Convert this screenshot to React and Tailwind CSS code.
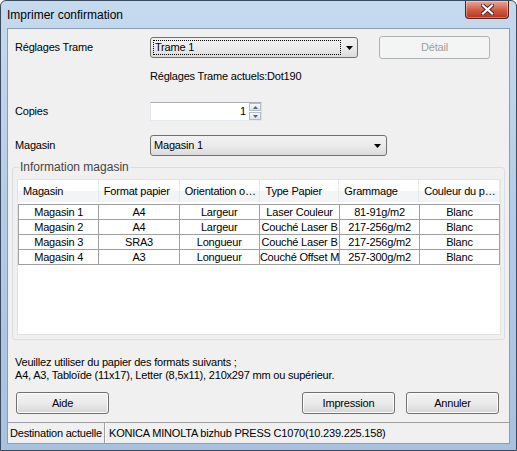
import React from "react";

const COLONNES = [
  { titre: "Magasin", w: "w-[81px]" },
  { titre: "Format papier", w: "w-[81px]" },
  { titre: "Orientation o…", w: "w-[81px]" },
  { titre: "Type Papier", w: "w-[79px]" },
  { titre: "Grammage", w: "w-[80px]" },
  { titre: "Couleur du p…", w: "w-[81px]" },
];

const MAGASINS = [
  ["Magasin 1", "A4", "Largeur", "Laser Couleur", "81-91g/m2", "Blanc"],
  ["Magasin 2", "A4", "Largeur", "Couché Laser B", "217-256g/m2", "Blanc"],
  ["Magasin 3", "SRA3", "Longueur", "Couché Laser B", "217-256g/m2", "Blanc"],
  ["Magasin 4", "A3", "Longueur", "Couché Offset M", "257-300g/m2", "Blanc"],
];

function Fleche({ className = "" }) {
  return (
    <svg className={className} width="7" height="4" viewBox="0 0 7 4">
      <path d="M0 0h7L3.5 4z" fill="#000" />
    </svg>
  );
}

function Bouton({ children, className = "", disabled }) {
  return (
    <button
      className={`h-[22px] w-[93px] rounded-[3px] border text-[11px] ${
        disabled
          ? "border-[#adb2b5] bg-[#f4f4f4] text-[#a0a0a0]"
          : "border-[#707070] bg-gradient-to-b from-[#f2f2f2] via-[#ebebeb] to-[#d6d6d6] text-black shadow-[inset_0_0_0_1px_#fcfcfc]"
      } ${className}`}
    >
      {children}
    </button>
  );
}

export default function App() {
  return (
    <div className="relative flex h-[451px] w-[517px] flex-col overflow-hidden rounded-t-[6px] border border-[#3a4b60] bg-gradient-to-b from-[#c6daee] via-[#b3cbe6] to-[#a7c2e0] font-['Liberation_Sans',Arial,sans-serif] text-[11px] tracking-[-0.2px] text-black">
      {/* Barre de titre */}
      <div className="flex h-[27px] shrink-0 items-center pl-[6px] text-[12px] tracking-normal text-black">Imprimer confirmation</div>
      <div className="absolute right-[7px] top-0 flex h-[18px] w-[44px] items-center justify-center rounded-b-[4px] border border-t-0 border-[#5a2018] bg-gradient-to-b from-[#e9a899] via-[#d0604a] to-[#b7301c] shadow-[inset_0_0_0_1px_rgba(255,255,255,0.35)]">
        <svg width="13" height="11" viewBox="0 0 13 11">
          <path d="M2 1.5l9 8M11 1.5l-9 8" stroke="#3d2a28" strokeWidth="4" strokeLinecap="square" />
          <path d="M2 1.5l9 8M11 1.5l-9 8" stroke="#fff" strokeWidth="2.2" strokeLinecap="square" />
        </svg>
      </div>

      {/* Zone client */}
      <div className="mx-[6px] flex h-[416px] flex-col border border-[#8d9db1] bg-[#f0f0f0]">
        <div className="mt-[7px] flex h-[23px] items-center">
          <span className="w-[142px] pl-[7px]">Réglages Trame</span>
          <div className="flex h-[21px] w-[208px] items-center rounded-[3px] border border-[#707070] bg-gradient-to-b from-[#f2f2f2] via-[#ebebeb] to-[#dcdcdc] px-[2px]">
            <div className="flex h-[15px] w-[188px] items-center border border-dotted border-black pl-[1px]">Trame 1</div>
            <Fleche className="ml-[5px]" />
          </div>
          <Bouton disabled className="ml-[21px] h-[23px] w-[111px]">Détail</Bouton>
        </div>

        <div className="mt-[10px] h-[14px] pl-[142px] leading-[14px]">Réglages Trame actuels:Dot190</div>

        <div className="mt-[19px] flex h-[19px] items-center">
          <span className="w-[142px] pl-[7px]">Copies</span>
          <div className="flex h-[19px] w-[112px] items-center border border-[#abadb3] border-b-[#e3e9ef] border-l-[#e2e3ea] border-r-[#dbdfe6] bg-white">
            <span className="flex-1 pr-[3px] text-right">1</span>
            <div className="flex h-[17px] w-[12px] flex-col">
              <div className="flex h-[8px] items-center justify-center border border-[#b6bcc6] bg-gradient-to-b from-[#f6f8fb] to-[#dfe4ea]">
                <svg width="5" height="3" viewBox="0 0 5 3"><path d="M0 3h5L2.5 0z" fill="#4d6185" /></svg>
              </div>
              <div className="mt-[1px] flex h-[8px] items-center justify-center border border-[#b6bcc6] bg-gradient-to-b from-[#f6f8fb] to-[#dfe4ea]">
                <svg width="5" height="3" viewBox="0 0 5 3"><path d="M0 0h5L2.5 3z" fill="#4d6185" /></svg>
              </div>
            </div>
          </div>
        </div>

        <div className="mt-[14px] flex h-[21px] items-center">
          <span className="w-[142px] pl-[7px]">Magasin</span>
          <div className="flex h-[21px] w-[237px] items-center justify-between rounded-[3px] border border-[#707070] bg-gradient-to-b from-[#f2f2f2] via-[#ebebeb] to-[#dcdcdc] pl-[3px] pr-[5px]">
            <span>Magasin 1</span>
            <Fleche />
          </div>
        </div>

        {/* Information magasin */}
        <div className="relative mx-[4px] mt-[11px] h-[173px] rounded-[3px] border border-[#d5dfe5] px-[4px] pb-[4px] pt-[11px]">
          <span className="absolute -top-[8px] left-[6px] bg-[#f0f0f0] px-[1px] text-[12px] leading-[14px] tracking-normal text-[#444]">Information magasin</span>
          <div className="h-full w-[484px] border border-[#e3e3e3] bg-white">
            <div className="flex h-[22px] bg-gradient-to-b from-white from-50% to-[#f3f4f6] to-50%">
              {COLONNES.map((c) => (
                <div key={c.titre} className={`${c.w} flex items-center border-r border-[#e5e8ec] pl-[5px]`}>
                  {c.titre}
                </div>
              ))}
            </div>
            <table className="mt-[2px] border-collapse">
              <tbody>
                {MAGASINS.map((ligne) => (
                  <tr key={ligne[0]}>
                    {ligne.map((v, i) => (
                      <td
                        key={i}
                        className={`${COLONNES[i].w} h-[15px] border border-[#a0a0a0] p-0 text-center leading-[13px] whitespace-nowrap overflow-hidden`}
                      >
                        {v}
                      </td>
                    ))}
                  </tr>
                ))}
              </tbody>
            </table>
          </div>
        </div>

        <div className="mt-[16px] pl-[7px] leading-[13px]">
          <p>Veuillez utiliser du papier des formats suivants ;</p>
          <p>A4, A3, Tabloïde (11x17), Letter (8,5x11), 210x297 mm ou supérieur.</p>
        </div>

        <div className="mt-[10px] flex items-center pl-[8px] pr-[10px]">
          <Bouton>Aide</Bouton>
          <Bouton className="ml-auto">Impression</Bouton>
          <Bouton className="ml-[11px] w-[92px]">Annuler</Bouton>
        </div>

        {/* Barre d'état */}
        <div className="mt-[8px] flex flex-1 items-stretch border-t border-[#a0a0a0] bg-[#f0f0f0]">
          <div className="flex w-[97px] items-center whitespace-nowrap border-r border-[#a0a0a0] pl-[2px]">Destination actuelle</div>
          <div className="flex flex-1 items-center whitespace-nowrap border-l border-white pl-[3px]">KONICA MINOLTA bizhub PRESS C1070(10.239.225.158)</div>
        </div>
      </div>
    </div>
  );
}
